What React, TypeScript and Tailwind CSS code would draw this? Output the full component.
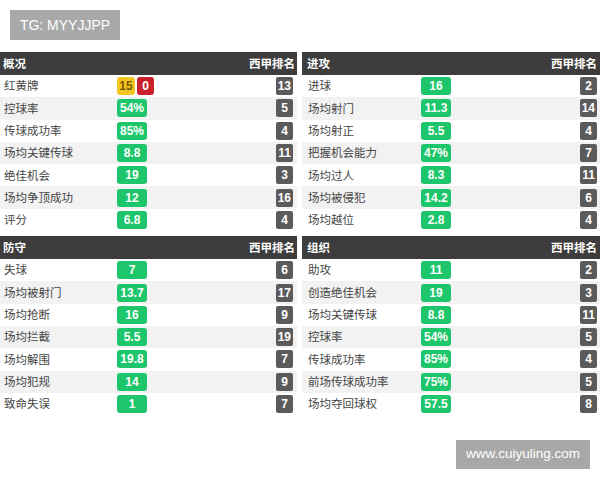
type Row = { label: string; value?: string; rank: string; cards?: [string, string] };

type Section = { title: string; rows: Row[] };

const sections: Section[] = [
  {
    title: '概况',
    rows: [
      { label: '红黄牌', rank: '13', cards: ['15', '0'] },
      { label: '控球率', value: '54%', rank: '5' },
      { label: '传球成功率', value: '85%', rank: '4' },
      { label: '场均关键传球', value: '8.8', rank: '11' },
      { label: '绝佳机会', value: '19', rank: '3' },
      { label: '场均争顶成功', value: '12', rank: '16' },
      { label: '评分', value: '6.8', rank: '4' },
    ],
  },
  {
    title: '进攻',
    rows: [
      { label: '进球', value: '16', rank: '2' },
      { label: '场均射门', value: '11.3', rank: '14' },
      { label: '场均射正', value: '5.5', rank: '4' },
      { label: '把握机会能力', value: '47%', rank: '7' },
      { label: '场均过人', value: '8.3', rank: '11' },
      { label: '场均被侵犯', value: '14.2', rank: '6' },
      { label: '场均越位', value: '2.8', rank: '4' },
    ],
  },
  {
    title: '防守',
    rows: [
      { label: '失球', value: '7', rank: '6' },
      { label: '场均被射门', value: '13.7', rank: '17' },
      { label: '场均抢断', value: '16', rank: '9' },
      { label: '场均拦截', value: '5.5', rank: '19' },
      { label: '场均解围', value: '19.8', rank: '7' },
      { label: '场均犯规', value: '14', rank: '9' },
      { label: '致命失误', value: '1', rank: '7' },
    ],
  },
  {
    title: '组织',
    rows: [
      { label: '助攻', value: '11', rank: '2' },
      { label: '创造绝佳机会', value: '19', rank: '3' },
      { label: '场均关键传球', value: '8.8', rank: '11' },
      { label: '控球率', value: '54%', rank: '5' },
      { label: '传球成功率', value: '85%', rank: '4' },
      { label: '前场传球成功率', value: '75%', rank: '5' },
      { label: '场均夺回球权', value: '57.5', rank: '8' },
    ],
  },
];

const cjk = "font-['Noto_Sans_CJK_SC','Noto_Sans',sans-serif]";
const num = "font-['Liberation_Sans',Arial,sans-serif]";

const StatPanel = ({ section, right }: { section: Section; right?: boolean }) => (
  <div className="flex flex-col">
    <div className={`flex h-[23px] items-center justify-between bg-[#3d3d3d] text-[11.5px] font-bold text-white ${cjk} ${right ? 'pl-[5px] pr-[3px]' : 'pl-[3px] pr-[2px]'}`}>
      <span>{section.title}</span>
      <span>西甲排名</span>
    </div>
    {section.rows.map((row, i) => (
      <div
        key={row.label}
        className={`flex h-[22.3px] items-center ${i % 2 === 1 ? 'bg-[#f2f2f2]' : 'bg-white'} ${right ? 'pl-[6px] pr-[3px]' : 'pl-[4px] pr-[4px]'}`}
      >
        <span className={`w-[113px] text-[11.5px] leading-none text-[#444] ${cjk}`}>{row.label}</span>
        {row.cards ? (
          <div className="flex gap-[2px]">
            <span className={`flex h-[18px] w-[18px] items-center justify-center rounded-[3px] bg-[#f3c623] text-[12px] font-bold text-[#7a5a00] ${num}`}>
              {row.cards[0]}
            </span>
            <span className={`flex h-[18px] w-[17px] items-center justify-center rounded-[3px] bg-[#c9212b] text-[12px] font-bold text-white ${num}`}>
              {row.cards[1]}
            </span>
          </div>
        ) : (
          <span className={`flex h-[18px] w-[30px] items-center justify-center rounded-[3px] bg-[#1ec66b] text-[12px] font-bold text-white ${num}`}>
            {row.value}
          </span>
        )}
        <span className={`ml-auto flex h-[18px] min-w-[17px] items-center justify-center rounded-[2px] bg-[#5b5b5b] px-[2px] text-[12px] font-bold text-white ${num}`}>
          {row.rank}
        </span>
      </div>
    ))}
  </div>
);

export default function App() {
  return (
    <div className="relative h-[480px] w-[600px] overflow-hidden bg-white">
      <div className="px-[10px] pt-[10px]">
        <div className={`flex h-[30px] w-[110px] items-center justify-center bg-[#a9a9a9] text-[14px] text-white ${num}`}>
          TG: MYYJJPP
        </div>
      </div>
      <div className="mt-[12px] grid grid-cols-[297px_298px] gap-x-[5px] gap-y-[5px]">
        {sections.map((s, i) => (
          <StatPanel key={s.title} section={s} right={i % 2 === 1} />
        ))}
      </div>
      <div className={`absolute left-[456px] top-[440px] flex h-[29px] w-[134px] items-center justify-center bg-[#a8a8a8] text-[13.5px] text-white ${num}`}>
        www.cuiyuling.com
      </div>
    </div>
  );
}
